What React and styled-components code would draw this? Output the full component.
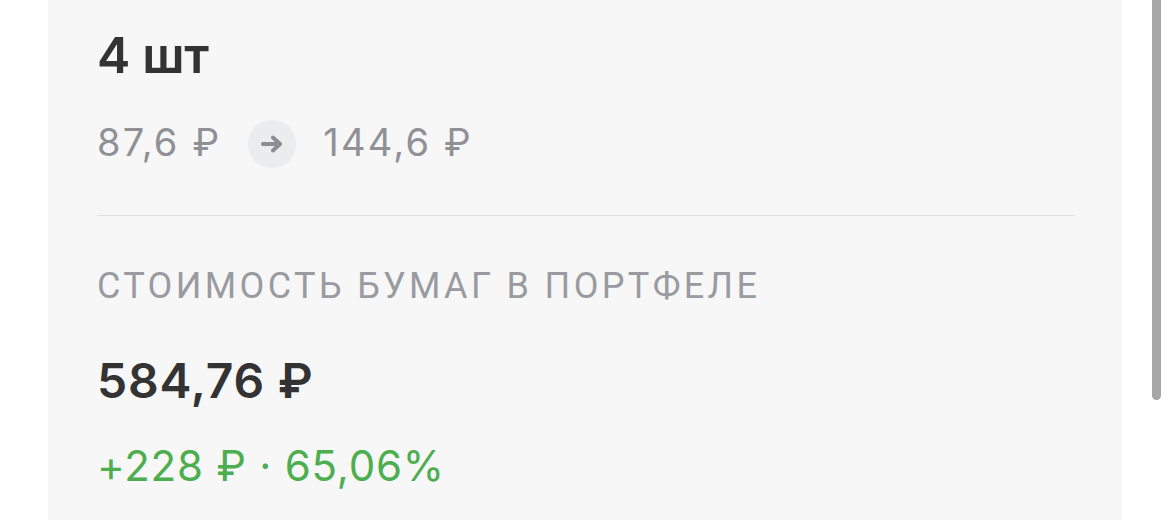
import React from "react";
import styled, { createGlobalStyle } from "styled-components";

const GlobalStyle = createGlobalStyle`
  html, body {
    margin: 0;
    padding: 0;
    background: #ffffff;
  }
  body {
    font-family: Inter, "Noto Sans", sans-serif;
  }
`;

const Page = styled.div`
  position: relative;
  width: 1170px;
  height: 520px;
  overflow: hidden;
  background: #ffffff;
`;

const Panel = styled.div`
  margin-left: 48px;
  width: 1074px;
  height: 520px;
  box-sizing: border-box;
  padding: 0 48px 0 49px;
  background: #f7f7f7;
  display: flex;
  flex-direction: column;
`;

const Amount = styled.div`
  font-size: ${(p) => p.size}px;
  line-height: 1;
  font-weight: 600;
  color: #333333;
  margin-top: ${(p) => p.top}px;
  letter-spacing: ${(p) => p.spacing}px;
`;

const PriceRow = styled.div`
  display: flex;
  align-items: center;
  margin-top: 40px;
  gap: 27px;
`;

const Price = styled.span`
  font-size: 38px;
  line-height: 48px;
  margin-top: -5px;
  color: #8f9196;
  letter-spacing: 2.2px;
`;

const ArrowCircle = styled.span`
  width: 48px;
  height: 48px;
  border-radius: 50%;
  background: #ebecee;
  display: flex;
  align-items: center;
  justify-content: center;
`;

const Divider = styled.div`
  height: 1px;
  background: #e0e0e2;
  margin-top: 47px;
`;

const Label = styled.div`
  margin-top: 52px;
  font-family: Roboto, "Noto Sans", sans-serif;
  font-size: 36px;
  line-height: 1;
  color: #999ba0;
  letter-spacing: 3.35px;
`;

const Change = styled.div`
  margin-top: 40px;
  font-size: 42px;
  line-height: 1;
  color: #4cae4f;
  letter-spacing: 0.8px;
`;

const Scrollbar = styled.div`
  position: absolute;
  top: 0;
  left: 1152px;
  width: 9px;
  height: 400px;
  border-radius: 0 0 5px 5px;
  background: #a6a6a6;
`;

const Arrow = () => (
  <svg width="22" height="18" viewBox="0 0 22 18" fill="none">
    <path
      d="M2 9 H19 M12 2.5 L19 9 L12 15.5"
      stroke="#8a8d91"
      strokeWidth="4"
      strokeLinecap="round"
      strokeLinejoin="round"
    />
  </svg>
);

export default function App() {
  return (
    <Page>
      <GlobalStyle />
      <Panel>
        <Amount size={50} top={30} spacing={-0.3}>
          4 шт
        </Amount>
        <PriceRow>
          <Price>87,6 ₽</Price>
          <ArrowCircle>
            <Arrow />
          </ArrowCircle>
          <Price>144,6 ₽</Price>
        </PriceRow>
        <Divider />
        <Label>СТОИМОСТЬ БУМАГ В ПОРТФЕЛЕ</Label>
        <Amount size={48} top={53} spacing={0.8}>
          584,76 ₽
        </Amount>
        <Change>+228 ₽ · 65,06%</Change>
      </Panel>
      <Scrollbar />
    </Page>
  );
}
